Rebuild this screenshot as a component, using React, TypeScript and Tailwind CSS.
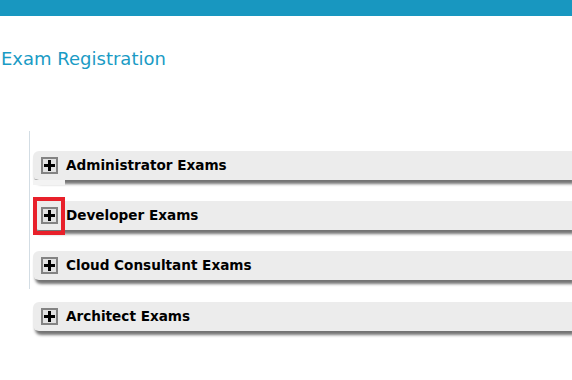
import React from 'react';

const PlusBox: React.FC = () => (
  <span className="flex h-[17px] w-[17px] items-center justify-center border-2 border-[#838383] bg-[#e2e2e2]">
    <svg width="11" height="11" viewBox="0 0 11 11">
      <rect x="4" y="0" width="3" height="11" fill="#000" />
      <rect x="0" y="4" width="11" height="3" fill="#000" />
    </svg>
  </span>
);

interface PanelProps {
  title: string;
  focused?: boolean;
  active?: boolean;
}

const Panel: React.FC<PanelProps> = ({ title, focused, active }) => (
  <div className="relative flex h-[29px] items-center rounded-l-[6px] bg-[#ececec] pl-[8px] shadow-[2px_4px_3px_rgba(0,0,0,0.55)]">
    <div className="relative flex items-center">
      <PlusBox />
      {focused && (
        <span className="absolute -left-[8px] -top-[10px] h-[38px] w-[32px] border-[4px] border-[#e8202a]" />
      )}
    </div>
    <span className="ml-[8px] text-[13.6px] font-bold text-black">{title}</span>
    {active && (
      <span className="absolute left-0 top-full h-[5px] w-[32px] bg-[#f3f3f3]" />
    )}
  </div>
);

export default function App() {
  return (
    <div className="h-[380px] w-[572px] overflow-hidden bg-white font-['DejaVu_Sans',Verdana,sans-serif]">
      <div className="h-[16px] bg-[#1897c0]" />
      <h1 className="mt-[33px] pl-[1px] text-[18px] font-normal leading-[20px] text-[#1a9bc5]">
        Exam Registration
      </h1>
      <div className="ml-[29px] mt-[62px]">
        <div className="flex flex-col gap-[21px] border-l border-[#d3dde4] pb-[9px] pl-[3px] pt-[20px]">
          <Panel title="Administrator Exams" active />
          <Panel title="Developer Exams" focused />
          <Panel title="Cloud Consultant Exams" />
        </div>
        <div className="mt-[13px] pl-[4px]">
          <Panel title="Architect Exams" />
        </div>
      </div>
    </div>
  );
}
